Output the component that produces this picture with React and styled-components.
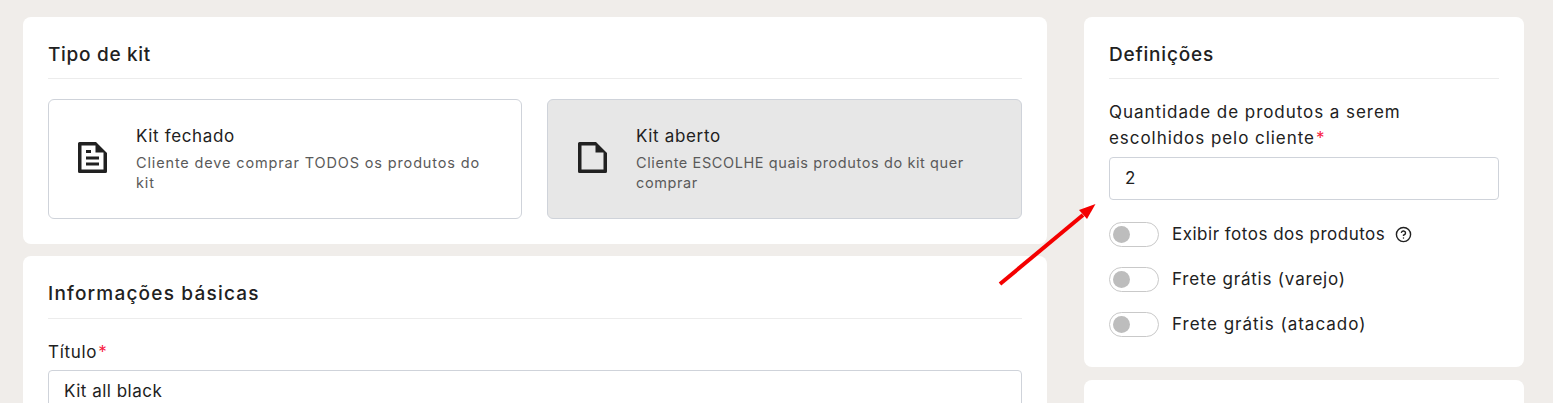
import React from "react";
import styled, { createGlobalStyle } from "styled-components";
import { CircleHelp } from "lucide-react";

const Global = createGlobalStyle`
  html, body { margin: 0; padding: 0; height: 403px; overflow: hidden; background: #f0edea; }
  * { box-sizing: border-box; }
  body { font-family: Inter, "Noto Sans", sans-serif; color: #212121; }
`;

const Page = styled.div`
  position: relative;
  height: 403px;
  overflow: hidden;
  padding: 17px 29px 0 23px;
  display: grid;
  grid-template-columns: 1024px 440px;
  column-gap: 37px;
  align-items: start;
`;
const Column = styled.div`
  display: flex;
  flex-direction: column;
  gap: ${(p) => p.$gap}px;
`;
const Card = styled.section`
  background: #fff;
  border-radius: 8px;
  padding: 26px 25px 25px;
`;
const CardTitle = styled.h2`
  margin: 0 0 20px;
  padding-bottom: ${(p) => p.$pb}px;
  border-bottom: 1px solid #ececec;
  font-size: 19px;
  line-height: 24px;
  font-weight: 500;
  letter-spacing: ${(p) => p.$ls}px;
  color: #212121;
`;
const Tiles = styled.div`
  display: grid;
  grid-template-columns: 474px 475px;
  column-gap: 25px;
`;
const Tile = styled.div`
  height: 120px;
  display: flex;
  align-items: center;
  gap: 29px;
  padding-left: ${(p) => (p.$active ? 30 : 29)}px;
  border: 1px solid #cfd3da;
  border-radius: 6px;
  background: ${(p) => (p.$active ? "#e7e7e7" : "#fff")};
`;
const TileIcon = styled.svg`
  width: 29px;
  height: 31px;
  flex: none;
  margin-top: -3px;
  color: #212121;
`;
const TileText = styled.div`
  max-width: 352px;
  padding-bottom: 2px;
`;
const TileTitle = styled.div`
  font-size: 17px;
  line-height: 24px;
  letter-spacing: 0.65px;
  margin-bottom: 5px;
`;
const TileDesc = styled.div`
  font-size: 14.5px;
  line-height: 20px;
  letter-spacing: ${(p) => p.$ls}px;
  color: #5a5a5a;
`;
const Label = styled.label`
  display: block;
  font-size: 17px;
  line-height: 26px;
  letter-spacing: ${(p) => p.$ls}px;
  margin-bottom: ${(p) => p.$mb}px;
  padding-right: 20px;
  color: #212121;
`;
const Required = styled.span`
  color: #f7203f;
  margin-left: 1px;
`;
const Input = styled.div`
  height: 43px;
  display: flex;
  align-items: center;
  padding: 0 15px 2px;
  border: 1px solid #cfd3da;
  border-radius: 4px;
  background: #fff;
  font-size: 17px;
  letter-spacing: 0.5px;
  color: #212121;
`;
const Toggles = styled.div`
  margin: 22px 0 5px;
  display: flex;
  flex-direction: column;
  gap: 20px;
`;
const ToggleRow = styled.div`
  display: flex;
  align-items: center;
  height: 25px;
  gap: 13px;
  color: #212121;
`;
const ToggleLabel = styled.span`
  display: flex;
  align-items: center;
  font-size: 17px;
  line-height: 23px;
  letter-spacing: ${(p) => p.$ls}px;
`;
const Track = styled.div`
  width: 50px;
  height: 25px;
  padding: 3px;
  border: 1px solid #c9c9c9;
  border-radius: 13px;
  background: #fff;
  flex: none;
`;
const Knob = styled.div`
  width: 17px;
  height: 17px;
  border-radius: 50%;
  background: #bdbdbd;
`;
const Help = styled(CircleHelp)`
  margin-left: 10px;
  flex: none;
`;
const ArrowOverlay = styled.svg`
  position: absolute;
  left: 990px;
  top: 195px;
  width: 120px;
  height: 100px;
  pointer-events: none;
`;
const Stub = styled(Card)`
  height: 60px;
`;

const DocIcon = ({ lines }) => (
  <TileIcon viewBox="0 0 29 31">
    <path
      fill="currentColor"
      fillRule="evenodd"
      d="M1.5 0H18L29 11V29.5A1.5 1.5 0 0 1 27.5 31H1.5A1.5 1.5 0 0 1 0 29.5V1.5A1.5 1.5 0 0 1 1.5 0ZM3.5 3.5V27.5H25.5V10.5H17.5V3.5Z"
    />
    {lines && (
      <g fill="currentColor">
        <rect x="8" y="8" width="5" height="3" />
        <rect x="8" y="14.5" width="13" height="3" />
        <rect x="8" y="20.5" width="13" height="3" />
      </g>
    )}
  </TileIcon>
);

const Toggle = ({ ls, children }) => (
  <ToggleRow>
    <Track>
      <Knob />
    </Track>
    <ToggleLabel $ls={ls}>{children}</ToggleLabel>
  </ToggleRow>
);

export default function App() {
  return (
    <>
      <Global />
      <Page>
        <Column $gap={12}>
          <Card>
            <CardTitle $ls={0.7} $pb={11}>Tipo de kit</CardTitle>
            <Tiles>
              <Tile>
                <DocIcon lines />
                <TileText>
                  <TileTitle>Kit fechado</TileTitle>
                  <TileDesc $ls={0.85}>Cliente deve comprar TODOS os produtos do kit</TileDesc>
                </TileText>
              </Tile>
              <Tile $active>
                <DocIcon />
                <TileText>
                  <TileTitle>Kit aberto</TileTitle>
                  <TileDesc $ls={0.6}>Cliente ESCOLHE quais produtos do kit quer comprar</TileDesc>
                </TileText>
              </Tile>
            </Tiles>
          </Card>
          <Card>
            <CardTitle $ls={1.2} $pb={12}>Informações básicas</CardTitle>
            <Label $ls={0.7} $mb={5}>
              Título<Required>*</Required>
            </Label>
            <Input>Kit all black</Input>
          </Card>
        </Column>
        <Column $gap={13}>
          <Card>
            <CardTitle $ls={0.8} $pb={11}>Definições</CardTitle>
            <Label $ls={0.95} $mb={6}>
              Quantidade de produtos a serem escolhidos pelo cliente<Required>*</Required>
            </Label>
            <Input>2</Input>
            <Toggles>
              <Toggle ls={0.5}>
                Exibir fotos dos produtos
                <Help size={17} strokeWidth={2} />
              </Toggle>
              <Toggle ls={0.8}>Frete grátis (varejo)</Toggle>
              <Toggle ls={1}>Frete grátis (atacado)</Toggle>
            </Toggles>
          </Card>
          <Stub />
        </Column>
        <ArrowOverlay viewBox="0 0 120 100">
          <line x1="10" y1="89" x2="93" y2="20" stroke="#f40000" strokeWidth="4" />
          <polygon points="105.5,9 89,15 97,24" fill="#f40000" />
        </ArrowOverlay>
      </Page>
    </>
  );
}
